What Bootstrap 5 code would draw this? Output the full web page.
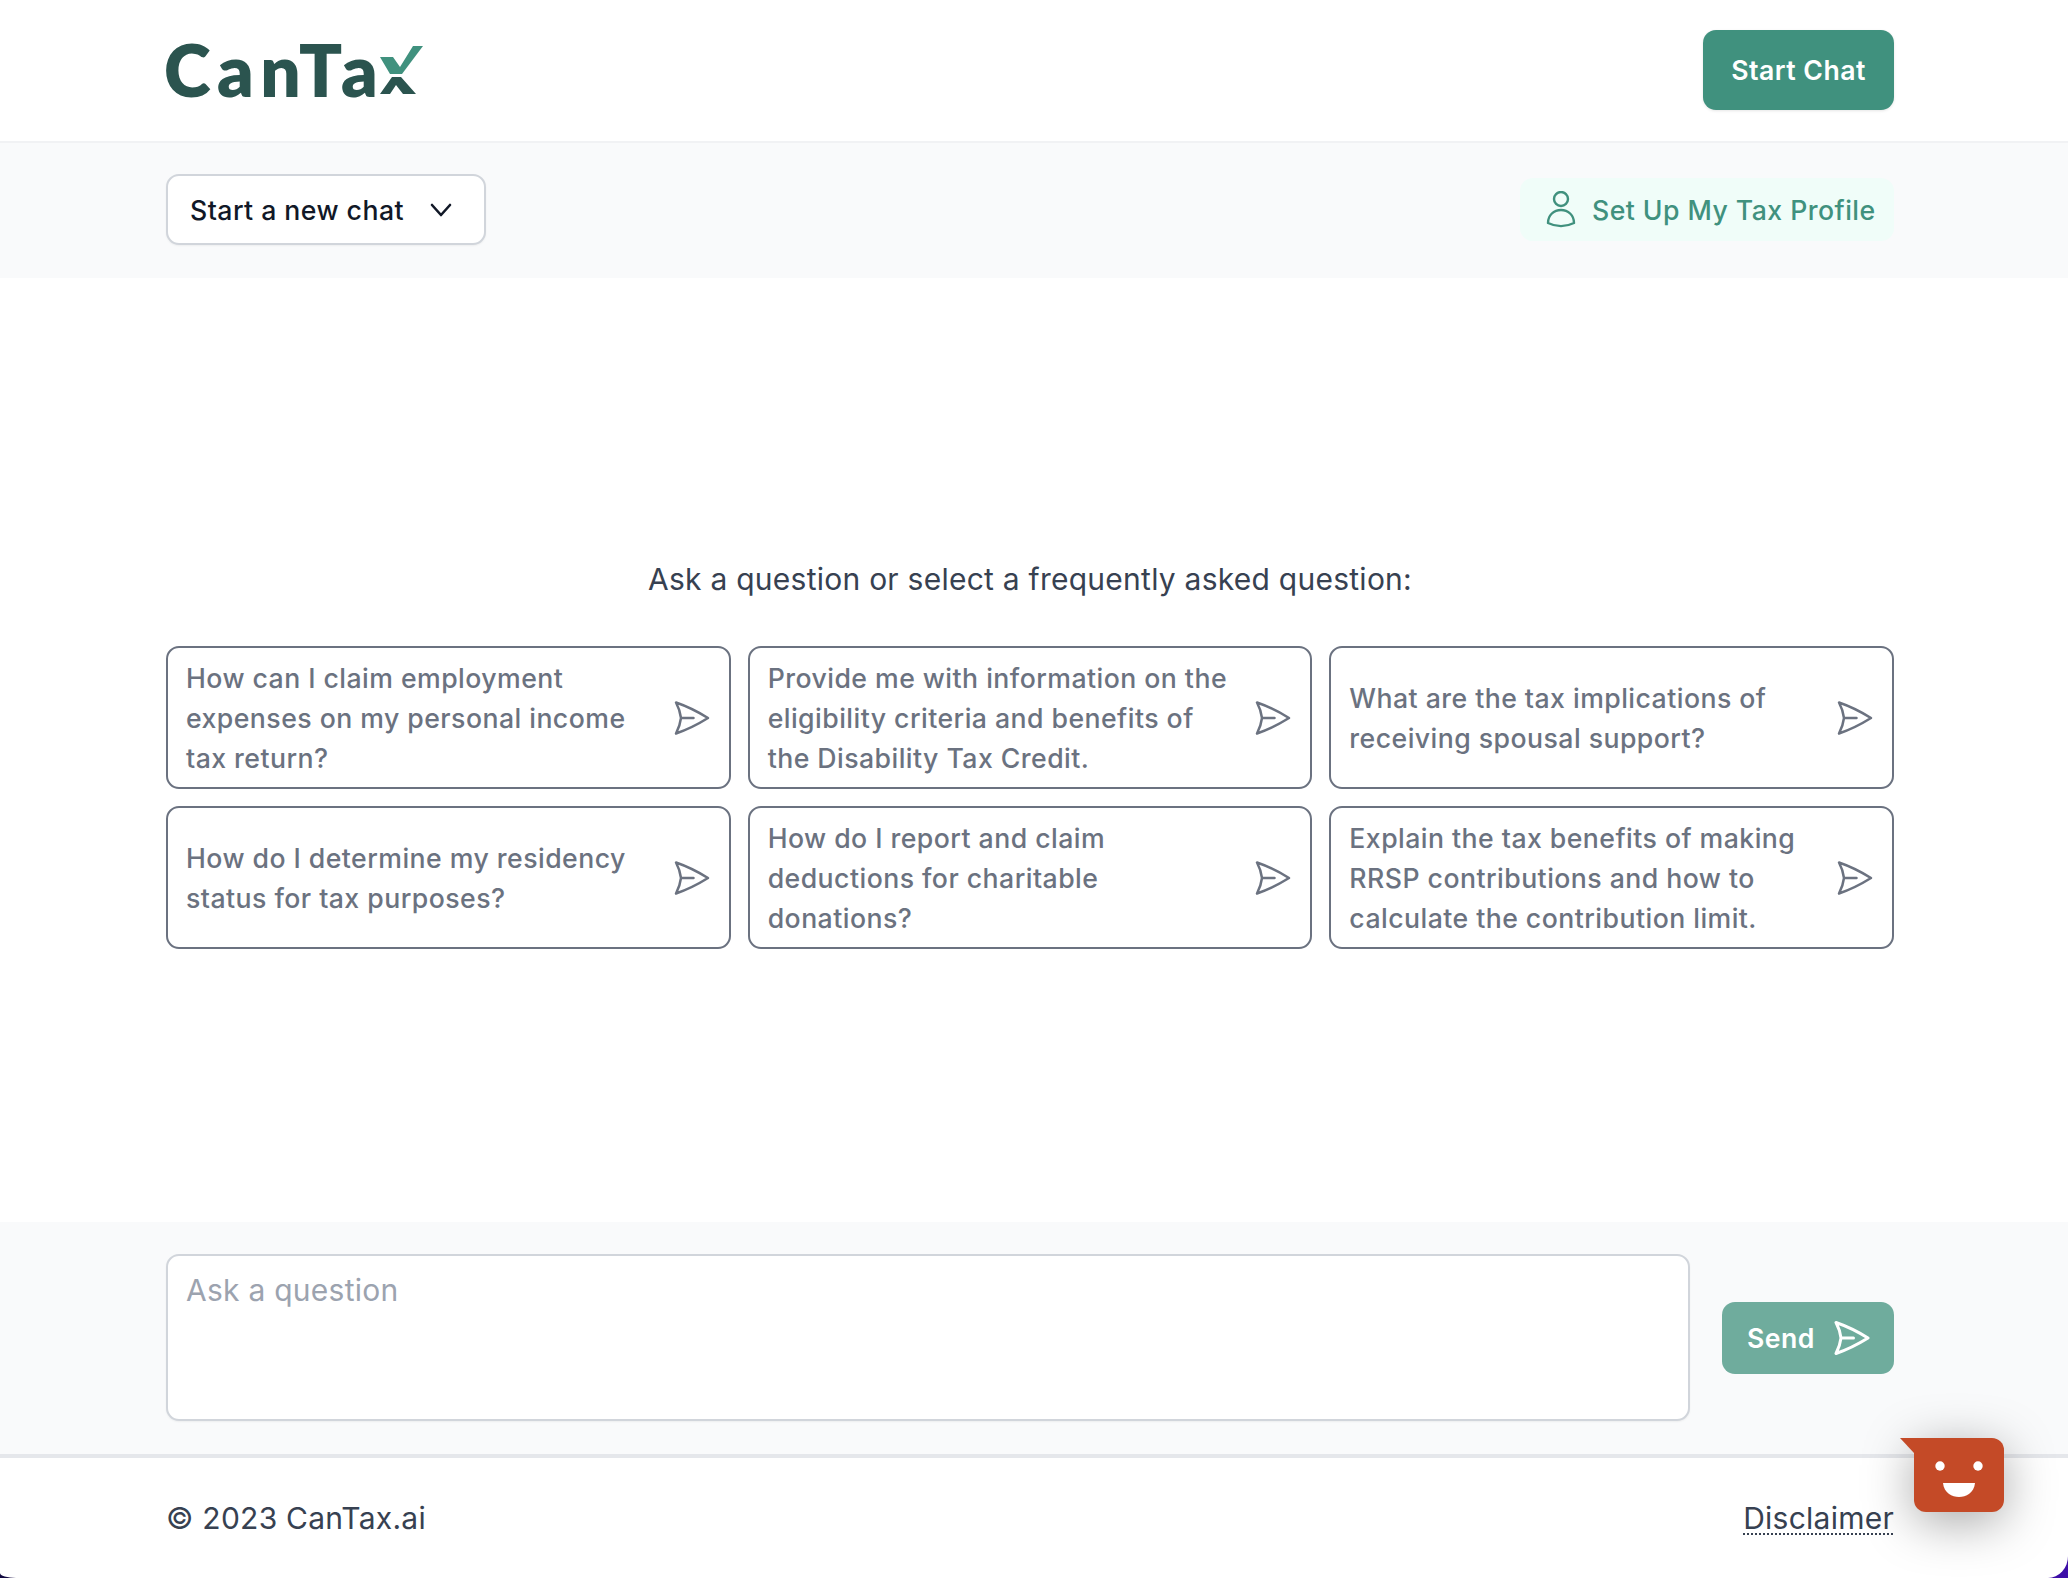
<!DOCTYPE html>
<html lang="en">
<head>
  <meta charset="UTF-8">
  <title>CanTax</title>
  <meta name="viewport" content="width=device-width, initial-scale=1.0"/>
  <link href="https://cdn.jsdelivr.net/npm/bootstrap@5.3.3/dist/css/bootstrap.min.css" rel="stylesheet">
  <style>
    html, body {
      height: 100%;
    }
    body {
      background: linear-gradient(90deg, #120a40, #3d0fa8);
      font-family: Inter, "Liberation Sans", sans-serif;
      font-size: 26.67px;
      line-height: 40px;
      letter-spacing: .45px;
      color: #374151;
    }
    .page-wrap {
      height: 1578px;
      background-color: #fff;
      border-radius: 0 0 20px 16px / 0 0 22px 5px;
      overflow: hidden;
      display: flex;
      flex-direction: column;
    }
    .inner-wrap {
      padding-left: 166px;
      padding-right: 174px;
    }
    .top-head {
      height: 143px;
      padding-bottom: 1px;
      border-bottom: 2px solid #f1f2f4;
    }
    .logo-wrap {
      color: #2b544f;
      font-family: Lato, sans-serif;
      font-weight: 800;
      font-size: 71px;
      line-height: 72px;
      letter-spacing: 6.5px;
      margin-left: -2px;
    }
    .logo-wrap svg {
      width: 44px;
      height: 49px;
      margin-left: -4px;
      margin-top: 1px;
    }
    .btn-start {
      width: 191px;
      height: 80px;
      background-color: #40917e;
      color: #fff;
      font-weight: 600;
      font-size: 26.67px;
      letter-spacing: .45px;
      border-radius: 13px;
      border: 0;
      box-shadow: 0 1px 3px rgba(0,0,0,.1);
    }
    .sub-bar {
      height: 135px;
      padding-bottom: 2px;
      background-color: #f9fafb;
    }
    .btn-newchat {
      width: 320px;
      height: 71px;
      background-color: #fff;
      border: 2px solid #d1d5db;
      border-radius: 13px;
      color: #111827;
      font-weight: 500;
      font-size: 26.67px;
      letter-spacing: .45px;
      padding: 0 32px 0 22px;
      box-shadow: 0 1px 2px rgba(0,0,0,.05);
    }
    .btn-profile {
      height: 63px;
      width: 374px;
      padding: 0 0 0 26px;
      background-color: #f0fdf9;
      color: #40917e;
      font-weight: 500;
      border: 0;
      border-radius: 13px;
      font-size: 26.67px;
      letter-spacing: .45px;
    }
    .main-area {
      flex: 1;
      padding-top: 275px;
    }
    .ask-line {
      color: #374151;
      font-size: 30px;
      letter-spacing: .25px;
      line-height: 52px;
      margin-bottom: 41px;
    }
    .faq-grid {
      display: grid;
      grid-template-columns: repeat(3, 1fr);
      gap: 17px;
    }
    .faq-item {
      height: 143px;
      border: 2px solid #6b7280;
      border-radius: 13px;
      padding: 0 19px 0 18px;
      color: #6b7280;
      font-weight: 500;
    }
    .faq-text {
      width: 470px;
    }
    .send-ico {
      width: 36px;
      height: 36px;
      flex: none;
      fill: none;
      stroke: currentColor;
      stroke-width: 2.5;
      stroke-linecap: round;
      stroke-linejoin: round;
    }
    .ask-bar {
      height: 232px;
      padding-bottom: 1px;
      background-color: #f9fafb;
    }
    .ask-input {
      width: 1524px;
      height: 167px;
      border: 2px solid #d1d5db;
      border-radius: 13px;
      padding: 14px 18px;
      font-size: 30px;
      line-height: 40px;
      letter-spacing: .25px;
      box-shadow: 0 1px 2px rgba(0,0,0,.05);
      resize: none;
      outline: 0;
    }
    .ask-input::placeholder {
      color: #9ca3af;
    }
    .btn-send {
      width: 172px;
      height: 72px;
      padding: 0 0 0 25px;
      background-color: #6fac9d;
      color: #fff;
      font-weight: 600;
      font-size: 26.67px;
      letter-spacing: .45px;
      border-radius: 13px;
      border: 0;
    }
    .btn-send .send-ico {
      margin-left: 19px;
      stroke-width: 3;
    }
    .foot-bar {
      height: 124px;
      border-top: 4px solid #e5e7eb;
      color: #374151;
      font-size: 30px;
      letter-spacing: .25px;
    }
    .foot-link {
      color: #374151;
      text-decoration: underline dotted 2px;
      text-underline-offset: 4px;
    }
    .chat-bubble {
      position: fixed;
      left: 1914px;
      top: 1438px;
      width: 90px;
      height: 74px;
      background-color: #c44a27;
      border-radius: 0 12px 12px 12px;
      box-shadow: 0 10px 50px rgba(0,0,0,.35);
    }
    .chat-bubble::before {
      content: "";
      position: absolute;
      left: -14px;
      top: 0;
      border-top: 15px solid #c44a27;
      border-left: 14px solid transparent;
    }
    .chat-bubble svg {
      position: absolute;
      inset: 0;
    }
  </style>
</head>
<body>

<div class="page-wrap">
  <!-- header -->
  <header class="top-head inner-wrap d-flex align-items-center justify-content-between">
    <div class="logo-wrap d-flex align-items-center">
      CanTa<svg viewBox="0 0 44 49"><path d="M12 31 H21 L36 48 H23 L16 39 L10 48 H0 Z" fill="#2b544f"/><path d="M0 11 H13 L20 21 L33 0 H43 L22 28 H10 Z" fill="#40917e"/></svg>
    </div>
    <button class="btn btn-start">Start Chat</button>
  </header>

  <div class="sub-bar inner-wrap d-flex align-items-center justify-content-between">
    <button class="btn btn-newchat d-flex align-items-center justify-content-between">
      Start a new chat
      <svg width="22" height="14" viewBox="0 0 22 14" fill="none" stroke="#111827" stroke-width="2.6" stroke-linecap="round" stroke-linejoin="round"><path d="M2 2l9 10 9-10"/></svg>
    </button>
    <button class="btn btn-profile d-flex align-items-center gap-3">
      <svg width="30" height="37" viewBox="0 0 30 37" fill="none" stroke="#40917e" stroke-width="2.4" stroke-linejoin="round"><circle cx="15" cy="8" r="7"/><path d="M2 32c0-8 6-13 13-13s13 5 13 13c-8 4-18 4-26 0z"/></svg>
      Set Up My Tax Profile
    </button>
  </div>

  <main class="main-area inner-wrap">
    <p class="ask-line text-center">Ask a question or select a frequently asked question:</p>
    <div class="faq-grid">
      <div class="faq-item d-flex align-items-center justify-content-between">
        <span class="faq-text">How can I claim employment expenses on my personal income tax return?</span>
        <svg class="send-ico" viewBox="0 0 36 36"><path d="M2 2.5Q18 8 34 18Q18 28 2 33.5Q6 26 7 18Q6 10 2 2.5ZM7 18H19.5"/></svg>
      </div>
      <div class="faq-item d-flex align-items-center justify-content-between">
        <span class="faq-text">Provide me with information on the eligibility criteria and benefits of the Disability Tax Credit.</span>
        <svg class="send-ico" viewBox="0 0 36 36"><path d="M2 2.5Q18 8 34 18Q18 28 2 33.5Q6 26 7 18Q6 10 2 2.5ZM7 18H19.5"/></svg>
      </div>
      <div class="faq-item d-flex align-items-center justify-content-between">
        <span class="faq-text">What are the tax implications of receiving spousal support?</span>
        <svg class="send-ico" viewBox="0 0 36 36"><path d="M2 2.5Q18 8 34 18Q18 28 2 33.5Q6 26 7 18Q6 10 2 2.5ZM7 18H19.5"/></svg>
      </div>
      <div class="faq-item d-flex align-items-center justify-content-between">
        <span class="faq-text">How do I determine my residency status for tax purposes?</span>
        <svg class="send-ico" viewBox="0 0 36 36"><path d="M2 2.5Q18 8 34 18Q18 28 2 33.5Q6 26 7 18Q6 10 2 2.5ZM7 18H19.5"/></svg>
      </div>
      <div class="faq-item d-flex align-items-center justify-content-between">
        <span class="faq-text">How do I report and claim deductions for charitable donations?</span>
        <svg class="send-ico" viewBox="0 0 36 36"><path d="M2 2.5Q18 8 34 18Q18 28 2 33.5Q6 26 7 18Q6 10 2 2.5ZM7 18H19.5"/></svg>
      </div>
      <div class="faq-item d-flex align-items-center justify-content-between">
        <span class="faq-text">Explain the tax benefits of making RRSP contributions and how to calculate the contribution limit.</span>
        <svg class="send-ico" viewBox="0 0 36 36"><path d="M2 2.5Q18 8 34 18Q18 28 2 33.5Q6 26 7 18Q6 10 2 2.5ZM7 18H19.5"/></svg>
      </div>
    </div>
  </main>

  <div class="ask-bar inner-wrap d-flex align-items-center justify-content-between">
    <textarea class="ask-input" placeholder="Ask a question"></textarea>
    <button class="btn btn-send d-flex align-items-center">
      Send
      <svg class="send-ico" viewBox="0 0 36 36"><path d="M2 2.5Q18 8 34 18Q18 28 2 33.5Q6 26 7 18Q6 10 2 2.5ZM7 18H19.5"/></svg>
    </button>
  </div>

  <footer class="foot-bar inner-wrap d-flex align-items-center justify-content-between">
    <span>© 2023 CanTax.ai</span>
    <a href="#" class="foot-link">Disclaimer</a>
  </footer>
</div>

<div class="chat-bubble">
  <svg viewBox="0 0 90 74" width="90" height="74"><circle cx="26" cy="28" r="4.7" fill="#fff"/><circle cx="64" cy="28" r="4.7" fill="#fff"/><path d="M29 45 H61 C60 55 52 59 45 59 C38 59 30 55 29 45 Z" fill="#fff"/></svg>
</div>

<script src="https://cdn.jsdelivr.net/npm/bootstrap@5.3.3/dist/js/bootstrap.bundle.min.js"></script>
</body>
</html>
